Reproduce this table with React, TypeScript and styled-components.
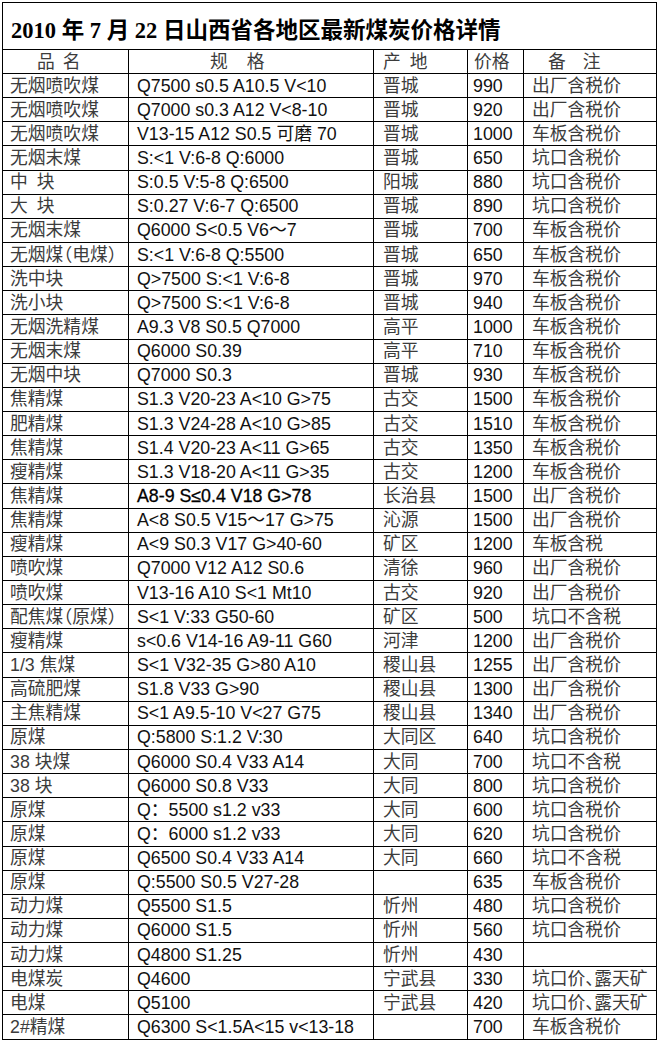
import React from 'react';
import styled, { createGlobalStyle, css } from 'styled-components';

type Row = [string, string, string, string, string];

const rows: Row[] = [
  ['无烟喷吹煤', 'Q7500 s0.5 A10.5 V<10', '晋城', '990', '出厂含税价'],
  ['无烟喷吹煤', 'Q7000 s0.3 A12 V<8-10', '晋城', '920', '出厂含税价'],
  ['无烟喷吹煤', 'V13-15 A12 S0.5 可磨 70', '晋城', '1000', '车板含税价'],
  ['无烟末煤', 'S:<1 V:6-8 Q:6000', '晋城', '650', '坑口含税价'],
  ['中\u2002块', 'S:0.5 V:5-8 Q:6500', '阳城', '880', '坑口含税价'],
  ['大\u2002块', 'S:0.27 V:6-7 Q:6500', '晋城', '890', '坑口含税价'],
  ['无烟末煤', 'Q6000 S<0.5 V6～7', '晋城', '700', '车板含税价'],
  ['无烟煤（电煤）', 'S:<1 V:6-8 Q:5500', '晋城', '650', '车板含税价'],
  ['洗中块', 'Q>7500 S:<1 V:6-8', '晋城', '970', '车板含税价'],
  ['洗小块', 'Q>7500 S:<1 V:6-8', '晋城', '940', '车板含税价'],
  ['无烟洗精煤', 'A9.3 V8 S0.5 Q7000', '高平', '1000', '车板含税价'],
  ['无烟末煤', 'Q6000 S0.39', '高平', '710', '车板含税价'],
  ['无烟中块', 'Q7000 S0.3', '晋城', '930', '车板含税价'],
  ['焦精煤', 'S1.3 V20-23 A<10 G>75', '古交', '1500', '车板含税价'],
  ['肥精煤', 'S1.3 V24-28 A<10 G>85', '古交', '1510', '车板含税价'],
  ['焦精煤', 'S1.4 V20-23 A<11 G>65', '古交', '1350', '车板含税价'],
  ['瘦精煤', 'S1.3 V18-20 A<11 G>35', '古交', '1200', '车板含税价'],
  ['焦精煤', 'A8-9 S≤0.4 V18 G>78', '长治县', '1500', '出厂含税价'],
  ['焦精煤', 'A<8 S0.5 V15～17 G>75', '沁源', '1500', '出厂含税价'],
  ['瘦精煤', 'A<9 S0.3 V17 G>40-60', '矿区', '1200', '车板含税'],
  ['喷吹煤', 'Q7000 V12 A12 S0.6', '清徐', '960', '出厂含税价'],
  ['喷吹煤', 'V13-16 A10 S<1 Mt10', '古交', '920', '出厂含税价'],
  ['配焦煤（原煤）', 'S<1 V:33 G50-60', '矿区', '500', '坑口不含税'],
  ['瘦精煤', 's<0.6 V14-16 A9-11 G60', '河津', '1200', '出厂含税价'],
  ['1/3 焦煤', 'S<1 V32-35 G>80 A10', '稷山县', '1255', '出厂含税价'],
  ['高硫肥煤', 'S1.8 V33 G>90', '稷山县', '1300', '出厂含税价'],
  ['主焦精煤', 'S<1 A9.5-10 V<27 G75', '稷山县', '1340', '出厂含税价'],
  ['原煤', 'Q:5800 S:1.2 V:30', '大同区', '640', '坑口含税价'],
  ['38 块煤', 'Q6000 S0.4 V33 A14', '大同', '700', '坑口不含税'],
  ['38 块', 'Q6000 S0.8 V33', '大同', '800', '坑口含税价'],
  ['原煤', 'Q：5500 s1.2 v33', '大同', '600', '坑口含税价'],
  ['原煤', 'Q：6000 s1.2 v33', '大同', '620', '坑口含税价'],
  ['原煤', 'Q6500 S0.4 V33 A14', '大同', '660', '坑口不含税'],
  ['原煤', 'Q:5500 S0.5 V27-28', '', '635', '车板含税价'],
  ['动力煤', 'Q5500 S1.5', '忻州', '480', '坑口含税价'],
  ['动力煤', 'Q6000 S1.5', '忻州', '560', '坑口含税价'],
  ['动力煤', 'Q4800 S1.25', '忻州', '430', ''],
  ['电煤炭', 'Q4600', '宁武县', '330', '坑口价、露天矿'],
  ['电煤', 'Q5100', '宁武县', '420', '坑口价、露天矿'],
  ['2#精煤', 'Q6300 S<1.5A<15 v<13-18', '', '700', '车板含税价'],
];

// the one spec value that is printed heavier in the sheet
const heavySpec = 'A8-9 S≤0.4 V18 G>78';

const columns = [
  { width: 126, pad: 7, tone: 'cjk' as const },
  { width: 245, pad: 8, tone: 'latin' as const },
  { width: 94, pad: 9, tone: 'cjk' as const },
  { width: 56, pad: 5, tone: 'latin' as const },
  { width: 133, pad: 8, tone: 'cjk' as const },
];

const headers = [
  { chars: ['品', '名'], pad: 34, gap: 8 },
  { chars: ['规', '格'], pad: 81, gap: 19 },
  { chars: ['产', '地'], pad: 9, gap: 9 },
  { chars: ['价格'], pad: 6, gap: 0 },
  { chars: ['备', '注'], pad: 24, gap: 17 },
];

const GlobalStyle = createGlobalStyle`
  html, body {
    margin: 0;
    padding: 0;
    background: #ffffff;
  }
`;

const Page = styled.div`
  padding: 2px 0 0 2px;
  font-family: "Liberation Sans", "Noto Sans CJK SC", sans-serif;
`;

const Sheet = styled.table`
  width: 654px;
  table-layout: fixed;
  border-collapse: collapse;
  border: 1px solid #000;
`;

const Col = styled.col<{ $w: number }>`
  width: ${(p) => p.$w}px;
`;

const TitleRow = styled.tr`
  height: 47px;
`;

const TitleCell = styled.td`
  border: 1px solid #000;
  padding: 3px 0 0 8px;
  vertical-align: middle;
  font-family: "Liberation Serif", "Noto Sans CJK SC", serif;
  font-size: 22.5px;
  font-weight: 700;
  color: #000;
  white-space: nowrap;
`;

const HeadRow = styled.tr`
  height: 24px;
`;

const BodyRow = styled.tr`
  height: 24.15px;
`;

const HeadCell = styled.td<{ $pad: number }>`
  border: 1px solid #000;
  padding: 0 0 0 ${(p) => p.$pad}px;
  vertical-align: middle;
  line-height: 20px;
`;

const HeadLabel = styled.div<{ $gap: number }>`
  display: flex;
  gap: ${(p) => p.$gap}px;
  font-size: 17.8px;
  color: #3c3c3c;
`;

const Cell = styled.td<{ $pad: number; $tone: 'cjk' | 'latin'; $heavy?: boolean }>`
  border: 1px solid #000;
  padding: 0 0 0 ${(p) => p.$pad}px;
  vertical-align: middle;
  font-size: 17.8px;
  line-height: 20px;
  white-space: nowrap;
  overflow: visible;
  color: ${(p) => (p.$tone === 'cjk' ? '#3c3c3c' : '#111')};
  ${(p) =>
    p.$tone === 'cjk' &&
    css`
      font-feature-settings: "halt";
    `}
  ${(p) =>
    p.$heavy &&
    css`
      -webkit-text-stroke: 0.3px #000;
      color: #000;
    `}
`;

const App: React.FC = () => {
  return (
    <Page>
      <GlobalStyle />
      <Sheet>
        <colgroup>
          {columns.map((c, i) => (
            <Col key={i} $w={c.width} />
          ))}
        </colgroup>
        <tbody>
          <TitleRow>
            <TitleCell colSpan={5}>2010 年 7 月 22 日山西省各地区最新煤炭价格详情</TitleCell>
          </TitleRow>
          <HeadRow>
            {headers.map((h, i) => (
              <HeadCell key={i} $pad={h.pad}>
                <HeadLabel $gap={h.gap}>
                  {h.chars.map((ch) => (
                    <span key={ch}>{ch}</span>
                  ))}
                </HeadLabel>
              </HeadCell>
            ))}
          </HeadRow>
          {rows.map((row, r) => (
            <BodyRow key={r}>
              {row.map((value, c) => (
                <Cell
                  key={c}
                  $pad={columns[c].pad}
                  $tone={columns[c].tone}
                  $heavy={c === 1 && value === heavySpec}
                >
                  {value}
                </Cell>
              ))}
            </BodyRow>
          ))}
        </tbody>
      </Sheet>
    </Page>
  );
};

export default App;
